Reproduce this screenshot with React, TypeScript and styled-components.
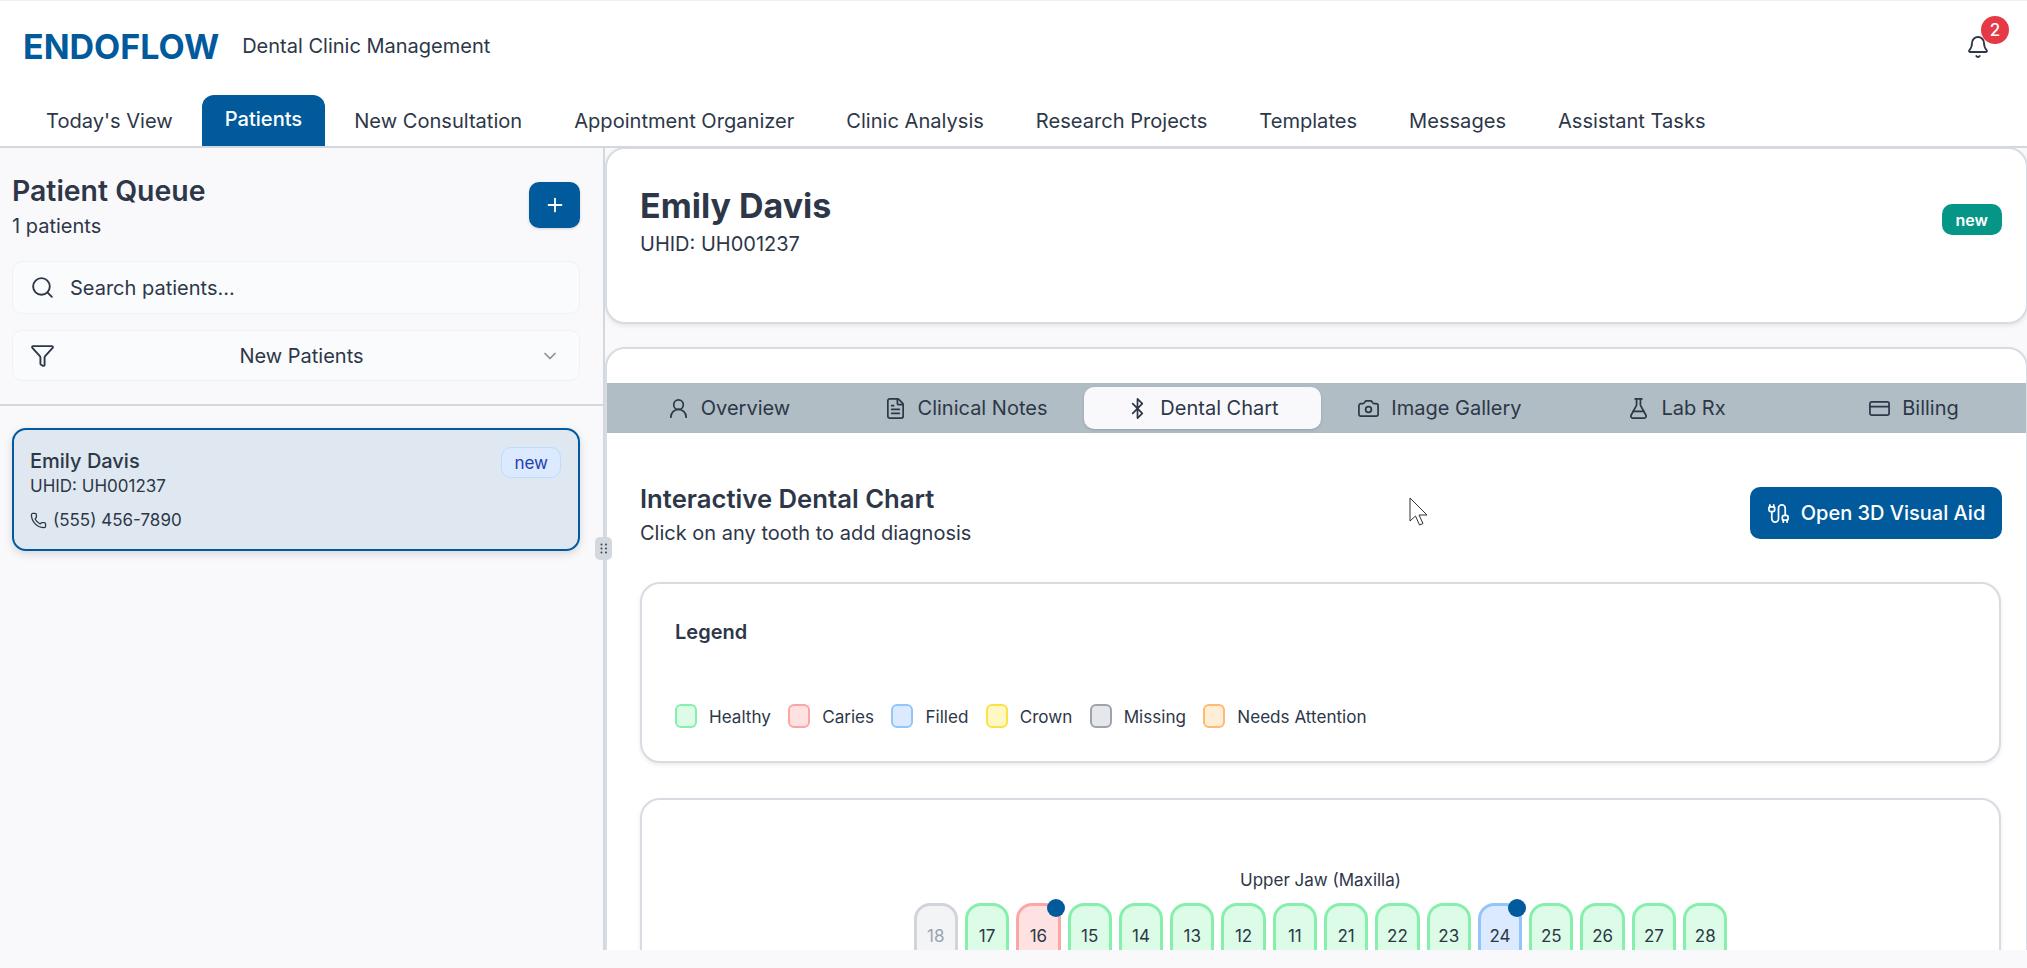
import React from "react";
import styled, { createGlobalStyle } from "styled-components";
import {
  Bell,
  Bluetooth,
  Cable,
  Camera,
  ChevronDown,
  CreditCard,
  FileText,
  Filter,
  FlaskConical,
  Phone,
  Plus,
  Search,
  UserRound,
} from "lucide-react";

const primary = "#005a9c";
const ink = "#2d3748";
const canvas = "#f9f9fc";

const GlobalStyle = createGlobalStyle`
  html, body {
    margin: 0;
    padding: 0;
    background: ${canvas};
    overflow: hidden;
  }
  * {
    box-sizing: border-box;
  }
  body {
    font-family: Inter, "Liberation Sans", sans-serif;
    color: ${ink};
  }
`;

const Page = styled.div`
  position: relative;
  width: 2027px;
  height: 950px;
  overflow: hidden;
  background: ${canvas};
`;

const Header = styled.header`
  height: 148px;
  background: #fff;
  border-top: 1px solid #eef0f3;
  border-bottom: 2px solid #d3d7de;
  display: flex;
  flex-direction: column;
`;

const TopRow = styled.div`
  height: 94px;
  padding: 0 23px 2px;
  display: flex;
  align-items: center;
  justify-content: space-between;
`;

const Brand = styled.div`
  display: flex;
  align-items: center;
  gap: 23px;
`;

const Logo = styled.h1`
  margin: 0 0 2px;
  font-size: 34px;
  font-weight: 700;
  color: ${primary};
`;

const Subtitle = styled.span`
  font-size: 20px;
  margin-bottom: 2px;
`;

const BellWrap = styled.div`
  position: relative;
  width: 24px;
  height: 24px;
  margin-right: 14px;
`;

const BellBadge = styled.span`
  position: absolute;
  left: 15px;
  top: -19px;
  width: 28px;
  height: 28px;
  border-radius: 50%;
  background: #e63946;
  color: #fff;
  font-size: 17px;
  font-weight: 500;
  display: flex;
  align-items: center;
  justify-content: center;
`;

const TabRow = styled.nav`
  padding-left: 23px;
  display: flex;
  gap: 6px;
`;

const NavTab = styled.div<{ $active?: boolean }>`
  height: 51px;
  padding: ${(p) => (p.$active ? "0 23px 3px" : "0 23px")};
  border-radius: 12px 12px 0 0;
  display: flex;
  align-items: center;
  font-size: 20.08px;
  font-weight: ${(p) => (p.$active ? 500 : 400)};
  color: ${(p) => (p.$active ? "#fff" : ink)};
  background: ${(p) => (p.$active ? primary : "transparent")};
`;

const Body = styled.div`
  display: flex;
  height: 802px;
`;

const Sidebar = styled.aside`
  width: 605px;
  flex-shrink: 0;
  border-right: 2px solid #d3d7de;
  display: flex;
  flex-direction: column;
`;

const QueueTop = styled.div`
  padding: 25px 23px 23px 12px;
  border-bottom: 2px solid #d3d7de;
  display: flex;
  flex-direction: column;
  gap: 16px;
`;

const QueueHead = styled.div`
  display: flex;
  justify-content: space-between;
  align-items: flex-start;
  margin-bottom: 6px;
`;

const QueueTitle = styled.h2`
  margin: 0;
  font-size: 28.4px;
  line-height: 36px;
  font-weight: 600;
`;

const QueueCount = styled.div`
  font-size: 20px;
  line-height: 26px;
  margin-top: 4px;
`;

const AddButton = styled.button`
  width: 51px;
  height: 46px;
  margin-top: 9px;
  border: none;
  border-radius: 10px;
  background: ${primary};
  color: #fff;
  display: flex;
  align-items: center;
  justify-content: center;
  box-shadow: 0 1px 3px rgba(0, 0, 0, 0.15);
`;

const Field = styled.div<{ $h: number }>`
  height: ${(p) => p.$h}px;
  padding: 0 19px 0 17px;
  border: 1px solid #f0f1f5;
  border-radius: 10px;
  background: #fafbfd;
  display: flex;
  align-items: center;
  font-size: 20px;
`;

const SearchText = styled.span`
  margin-left: 15px;
`;

const SelectText = styled.span`
  flex: 1;
  text-align: center;
  padding-left: 8px;
`;

const PatientList = styled.div`
  padding: 22px 23px 0 12px;
`;

const PatientCard = styled.div`
  height: 123px;
  padding: 18px 16px 0;
  border: 2px solid ${primary};
  border-radius: 14px;
  background: #dfe8f0;
  box-shadow: 0 3px 8px rgba(0, 0, 0, 0.14);
  position: relative;
`;

const PatientName = styled.div`
  font-size: 20px;
  line-height: 26px;
  font-weight: 500;
`;

const PatientId = styled.div`
  font-size: 17px;
  line-height: 22px;
  margin-top: 1px;
`;

const PatientPhone = styled.div`
  font-size: 17px;
  line-height: 22px;
  margin-top: 12px;
  display: flex;
  align-items: center;
  gap: 6px;
`;

const NewBadge = styled.span`
  position: absolute;
  right: 17px;
  top: 17px;
  height: 31px;
  padding: 0 12px;
  border: 1px solid #bfdbfe;
  border-radius: 10px;
  background: #dbeafe;
  color: #1e40af;
  font-size: 17px;
  display: flex;
  align-items: center;
`;

const ResizeHandle = styled.div`
  position: absolute;
  left: 595px;
  top: 537px;
  width: 17px;
  height: 23px;
  border-radius: 5px;
  background: #d3d7de;
  display: flex;
  align-items: center;
  justify-content: center;
`;

const Main = styled.main`
  flex: 1;
  min-width: 0;
  display: flex;
  flex-direction: column;
  gap: 23px;
  overflow: hidden;
`;

const Card = styled.section`
  width: 1423px;
  background: #fff;
  border: 2px solid #d8dce2;
  border-radius: 20px;
  box-shadow: 0 2px 4px rgba(0, 0, 0, 0.08);
  flex-shrink: 0;
`;

const PatientHead = styled(Card)`
  height: 177px;
  padding: 34px 24px 0 33px;
  display: flex;
  justify-content: space-between;
  align-items: flex-start;
  margin-top: -1px;
`;

const PatientHeadName = styled.h2`
  margin: 0;
  font-size: 34px;
  line-height: 46px;
  font-weight: 700;
`;

const PatientHeadId = styled.div`
  font-size: 20px;
  line-height: 28px;
  margin-top: 1px;
`;

const StatusPill = styled.span`
  margin-top: 21px;
  height: 31px;
  padding: 0 14px;
  border-radius: 10px;
  background: #059688;
  color: #fff;
  font-size: 16px;
  font-weight: 600;
  display: flex;
  align-items: center;
`;

const ChartCard = styled(Card)`
  padding-top: 34px;
  height: 700px;
  overflow: hidden;
`;

const SubTabs = styled.div`
  display: grid;
  grid-template-columns: repeat(6, 237px);
  height: 50px;
  padding: 4px 3px;
  background: #b0bdc5;
  width: 1440px;
`;

const SubTab = styled.div<{ $active?: boolean }>`
  display: flex;
  align-items: center;
  justify-content: center;
  gap: 11px;
  font-size: 20px;
  border-radius: 10px;
  background: ${(p) => (p.$active ? canvas : "transparent")};
  box-shadow: ${(p) => (p.$active ? "0 1px 3px rgba(0,0,0,.15)" : "none")};
`;

const ChartBody = styled.div`
  padding: 48px 24px 0 33px;
`;

const ChartHead = styled.div`
  display: flex;
  justify-content: space-between;
  align-items: flex-start;
  margin-bottom: 35px;
`;

const ChartTitle = styled.h3`
  margin: 0;
  font-size: 25.7px;
  line-height: 36px;
  font-weight: 600;
`;

const ChartSub = styled.div`
  font-size: 20px;
  line-height: 28px;
  margin-top: 2px;
`;

const VisualAid = styled.button`
  margin-top: 6px;
  width: 252px;
  height: 52px;
  border: none;
  border-radius: 10px;
  background: ${primary};
  color: #fff;
  font: 500 20px Inter, "Liberation Sans", sans-serif;
  display: flex;
  align-items: center;
  justify-content: center;
  gap: 11px;
`;

const InnerCard = styled.div`
  width: 1361px;
  background: #fff;
  border: 2px solid #d8dce2;
  border-radius: 20px;
  box-shadow: 0 2px 4px rgba(0, 0, 0, 0.08);
`;

const LegendCard = styled(InnerCard)`
  height: 181px;
  padding: 35px 33px 0;
  margin-bottom: 35px;
`;

const LegendTitle = styled.div`
  font-size: 20px;
  line-height: 26px;
  font-weight: 600;
`;

const LegendRow = styled.div`
  display: flex;
  gap: 17.3px;
  margin-top: 59px;
`;

const LegendItem = styled.div`
  display: flex;
  align-items: center;
  gap: 12px;
  font-size: 17.1px;
`;

const Swatch = styled.span<{ $bg: string; $line: string }>`
  width: 22px;
  height: 24px;
  border-radius: 6px;
  background: ${(p) => p.$bg};
  border: 2px solid ${(p) => p.$line};
`;

const JawCard = styled(InnerCard)`
  height: 400px;
  padding-top: 68px;
`;

const JawLabel = styled.div`
  text-align: center;
  font-size: 17px;
  line-height: 24px;
`;

const TeethRow = styled.div`
  display: flex;
  justify-content: center;
  gap: 7px;
  margin-top: 11px;
`;

const Tooth = styled.div<{ $bg: string; $line: string; $muted?: boolean }>`
  position: relative;
  width: 44.3px;
  height: 70px;
  padding-top: 13px;
  text-align: center;
  font-size: 17px;
  line-height: 34px;
  border-radius: 16px 16px 8px 8px;
  border: 3px solid ${(p) => p.$line};
  background: ${(p) => p.$bg};
  color: ${(p) => (p.$muted ? "#9ca3af" : ink)};
`;

const ToothDot = styled.span`
  position: absolute;
  right: -7px;
  top: -7px;
  width: 18px;
  height: 18px;
  border-radius: 50%;
  background: ${primary};
`;

const Pointer = styled.svg`
  position: absolute;
  left: 1409px;
  top: 497px;
  width: 20px;
  height: 30px;
`;

const navItems = [
  "Today's View",
  "Patients",
  "New Consultation",
  "Appointment Organizer",
  "Clinic Analysis",
  "Research Projects",
  "Templates",
  "Messages",
  "Assistant Tasks",
];

const subTabs = [
  { label: "Overview", Icon: UserRound },
  { label: "Clinical Notes", Icon: FileText },
  { label: "Dental Chart", Icon: Bluetooth },
  { label: "Image Gallery", Icon: Camera },
  { label: "Lab Rx", Icon: FlaskConical },
  { label: "Billing", Icon: CreditCard },
];

const status = {
  healthy: { bg: "#dcfce7", line: "#86efac" },
  caries: { bg: "#fee2e2", line: "#fca5a5" },
  filled: { bg: "#dbeafe", line: "#93c5fd" },
  crown: { bg: "#fef9c3", line: "#fde047" },
  missing: { bg: "#e5e7eb", line: "#9ca3af" },
  attention: { bg: "#ffedd5", line: "#fdba74" },
};

const legend = [
  { label: "Healthy", ...status.healthy },
  { label: "Caries", ...status.caries },
  { label: "Filled", ...status.filled },
  { label: "Crown", ...status.crown },
  { label: "Missing", ...status.missing },
  { label: "Needs Attention", ...status.attention },
];

const upperTeeth = [18, 17, 16, 15, 14, 13, 12, 11, 21, 22, 23, 24, 25, 26, 27, 28];

const toothColors = (n: number) => {
  if (n === 18) return { bg: "#f3f4f6", line: "#d1d5db" };
  if (n === 16) return status.caries;
  if (n === 24) return status.filled;
  return status.healthy;
};

const App = () => {
  return (
    <Page>
      <GlobalStyle />
      <Header>
        <TopRow>
          <Brand>
            <Logo>ENDOFLOW</Logo>
            <Subtitle>Dental Clinic Management</Subtitle>
          </Brand>
          <BellWrap>
            <Bell size={24} strokeWidth={1.8} />
            <BellBadge>2</BellBadge>
          </BellWrap>
        </TopRow>
        <TabRow>
          {navItems.map((item) => (
            <NavTab key={item} $active={item === "Patients"}>
              {item}
            </NavTab>
          ))}
        </TabRow>
      </Header>
      <Body>
        <Sidebar>
          <QueueTop>
            <QueueHead>
              <div>
                <QueueTitle>Patient Queue</QueueTitle>
                <QueueCount>1 patients</QueueCount>
              </div>
              <AddButton>
                <Plus size={22} strokeWidth={2} />
              </AddButton>
            </QueueHead>
            <Field $h={53}>
              <Search size={25} strokeWidth={1.8} />
              <SearchText>Search patients...</SearchText>
            </Field>
            <Field $h={51}>
              <Filter size={25} strokeWidth={1.8} />
              <SelectText>New Patients</SelectText>
              <ChevronDown size={20} color="#8a9099" />
            </Field>
          </QueueTop>
          <PatientList>
            <PatientCard>
              <PatientName>Emily Davis</PatientName>
              <PatientId>UHID: UH001237</PatientId>
              <PatientPhone>
                <Phone size={17} strokeWidth={1.8} />
                (555) 456-7890
              </PatientPhone>
              <NewBadge>new</NewBadge>
            </PatientCard>
          </PatientList>
        </Sidebar>
        <Main>
          <PatientHead>
            <div>
              <PatientHeadName>Emily Davis</PatientHeadName>
              <PatientHeadId>UHID: UH001237</PatientHeadId>
            </div>
            <StatusPill>new</StatusPill>
          </PatientHead>
          <ChartCard>
            <SubTabs>
              {subTabs.map(({ label, Icon }) => (
                <SubTab key={label} $active={label === "Dental Chart"}>
                  <Icon size={23} strokeWidth={1.8} />
                  {label}
                </SubTab>
              ))}
            </SubTabs>
            <ChartBody>
              <ChartHead>
                <div>
                  <ChartTitle>Interactive Dental Chart</ChartTitle>
                  <ChartSub>Click on any tooth to add diagnosis</ChartSub>
                </div>
                <VisualAid>
                  <Cable size={23} strokeWidth={1.8} />
                  Open 3D Visual Aid
                </VisualAid>
              </ChartHead>
              <LegendCard>
                <LegendTitle>Legend</LegendTitle>
                <LegendRow>
                  {legend.map((l) => (
                    <LegendItem key={l.label}>
                      <Swatch $bg={l.bg} $line={l.line} />
                      {l.label}
                    </LegendItem>
                  ))}
                </LegendRow>
              </LegendCard>
              <JawCard>
                <JawLabel>Upper Jaw (Maxilla)</JawLabel>
                <TeethRow>
                  {upperTeeth.map((n) => {
                    const c = toothColors(n);
                    return (
                      <Tooth key={n} $bg={c.bg} $line={c.line} $muted={n === 18}>
                        {n}
                        {(n === 16 || n === 24) && <ToothDot />}
                      </Tooth>
                    );
                  })}
                </TeethRow>
              </JawCard>
            </ChartBody>
          </ChartCard>
        </Main>
      </Body>
      <ResizeHandle>
        <svg width="8" height="11" viewBox="0 0 8 11" fill="#3a4452">
          <circle cx="1.5" cy="1.5" r="1" />
          <circle cx="6" cy="1.5" r="1" />
          <circle cx="1.5" cy="5.5" r="1" />
          <circle cx="6" cy="5.5" r="1" />
          <circle cx="1.5" cy="9.5" r="1" />
          <circle cx="6" cy="9.5" r="1" />
        </svg>
      </ResizeHandle>
      <Pointer viewBox="0 0 20 30">
        <path
          d="M1 1 L1 24 L6.5 19 L10.5 28 L14 26.5 L10 18 L18 18 Z"
          fill="#fff"
          stroke="#333"
          strokeWidth="1"
        />
      </Pointer>
    </Page>
  );
};

export default App;
